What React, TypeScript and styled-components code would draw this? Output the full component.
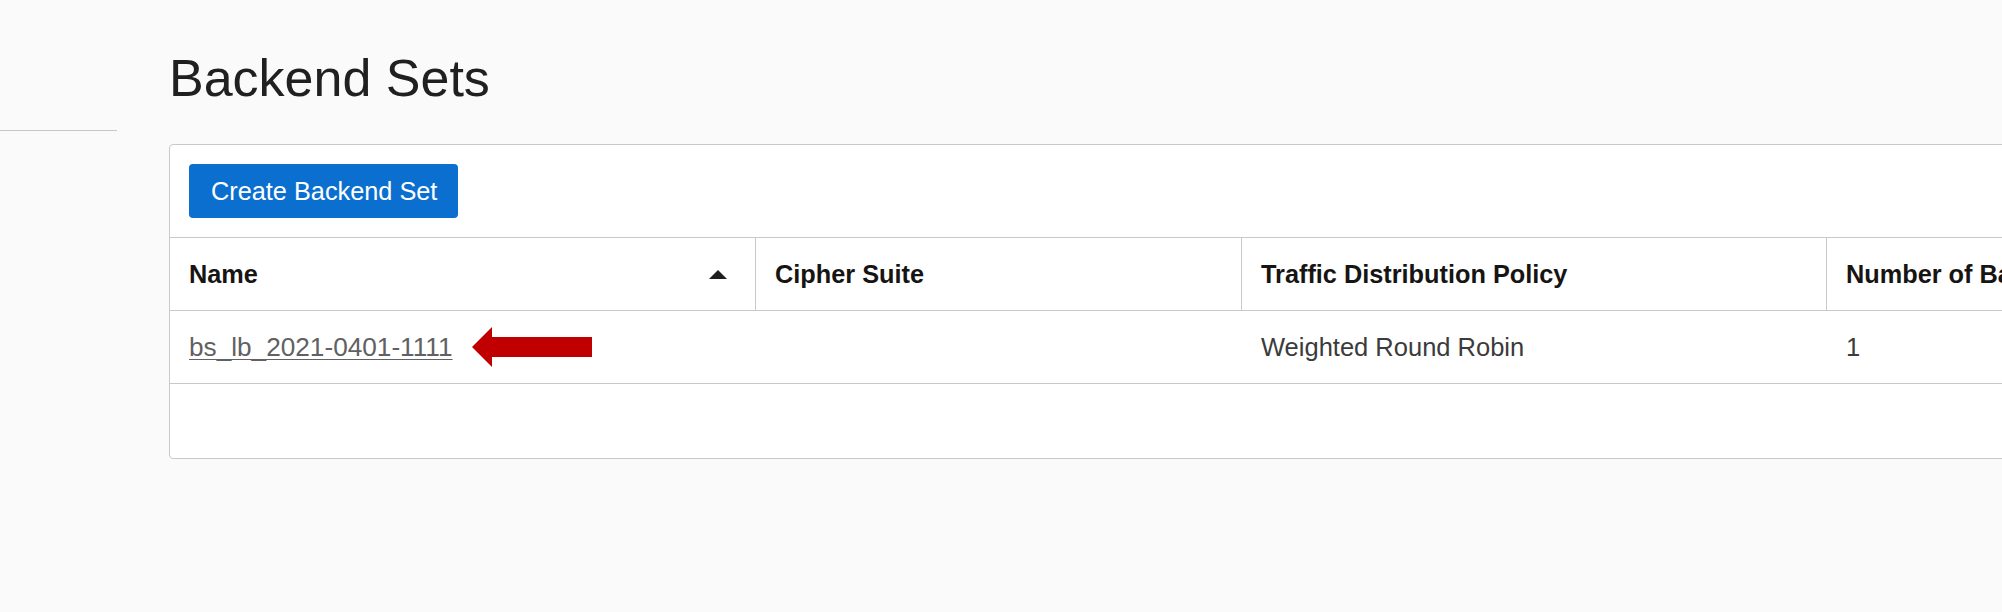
import React from "react";
import styled, { createGlobalStyle } from "styled-components";

const GlobalStyle = createGlobalStyle`
  html, body {
    margin: 0;
    padding: 0;
    background: #fafafa;
    overflow: hidden;
  }
  body {
    font-family: "Liberation Sans", Arial, Helvetica, sans-serif;
    color: #222;
  }
`;

const Page = styled.div`
  display: flex;
  width: 2002px;
  height: 612px;
  background: #fafafa;
`;

const Sidebar = styled.aside`
  width: 117px;
  flex: none;
  padding-top: 130px;
`;

const SideDivider = styled.div`
  height: 1px;
  background: #c3c7cd;
`;

const Main = styled.main`
  flex: none;
  width: 2000px;
  padding-left: 52px;
  padding-top: 53px;
`;

const Title = styled.h1`
  margin: 0 0 40px 0;
  font-size: 52px;
  line-height: 51px;
  font-weight: 400;
  color: #202020;
`;

const Panel = styled.section`
  background: #fff;
  border: 1px solid #c5cad1;
  border-radius: 4px;
  overflow: hidden;
`;

const Toolbar = styled.div`
  display: flex;
  align-items: center;
  padding: 19px 19px;
  border-bottom: 1px solid #c5cad1;
`;

const PrimaryButton = styled.button`
  height: 54px;
  padding: 0 21px 0 22px;
  border: none;
  border-radius: 4px;
  background: #0b6fcf;
  color: #fff;
  font-family: "Liberation Sans", Arial, Helvetica, sans-serif;
  font-size: 25.3px;
  cursor: pointer;
`;

const Row = styled.div`
  display: grid;
  grid-template-columns: 586px 486px 585px 1fr;
  height: 72px;
  border-bottom: 1px solid #c5cad1;
`;

const HeaderCell = styled.div<{ $last?: boolean }>`
  display: flex;
  align-items: center;
  padding: 0 19px;
  font-size: 25.3px;
  font-weight: 700;
  color: #161513;
  white-space: nowrap;
  border-right: ${(p) => (p.$last ? "none" : "1px solid #c5cad1")};
`;

const SortArrow = styled.span`
  margin-left: auto;
  margin-right: 9px;
  width: 0;
  height: 0;
  border-left: 9px solid transparent;
  border-right: 9px solid transparent;
  border-bottom: 9px solid #1e1e1e;
`;

const DataCell = styled.div`
  display: flex;
  align-items: center;
  padding: 0 19px;
  font-size: 25.5px;
  color: #3b3b3b;
  white-space: nowrap;
`;

const NameLink = styled.a`
  color: #616161;
  font-size: 26.2px;
  text-decoration: underline;
  text-underline-offset: 3px;
  text-decoration-thickness: 1px;
`;

const Pointer = styled.svg`
  margin-left: 19px;
  flex: none;
`;

const EmptyArea = styled.div`
  height: 74px;
`;

export default function App() {
  return (
    <>
      <GlobalStyle />
      <Page>
        <Sidebar>
          <SideDivider />
        </Sidebar>
        <Main>
          <Title>Backend Sets</Title>
          <Panel>
            <Toolbar>
              <PrimaryButton>Create Backend Set</PrimaryButton>
            </Toolbar>
            <Row>
              <HeaderCell>
                Name
                <SortArrow />
              </HeaderCell>
              <HeaderCell>Cipher Suite</HeaderCell>
              <HeaderCell>Traffic Distribution Policy</HeaderCell>
              <HeaderCell $last>Number of Backends</HeaderCell>
            </Row>
            <Row>
              <DataCell>
                <NameLink href="#">bs_lb_2021-0401-1111</NameLink>
                <Pointer width="120" height="40" viewBox="0 0 120 40">
                  <polygon
                    points="0,20 20,0 20,10 120,10 120,30 20,30 20,40"
                    fill="#c00000"
                  />
                </Pointer>
              </DataCell>
              <DataCell />
              <DataCell>Weighted Round Robin</DataCell>
              <DataCell>1</DataCell>
            </Row>
            <EmptyArea />
          </Panel>
        </Main>
      </Page>
    </>
  );
}
